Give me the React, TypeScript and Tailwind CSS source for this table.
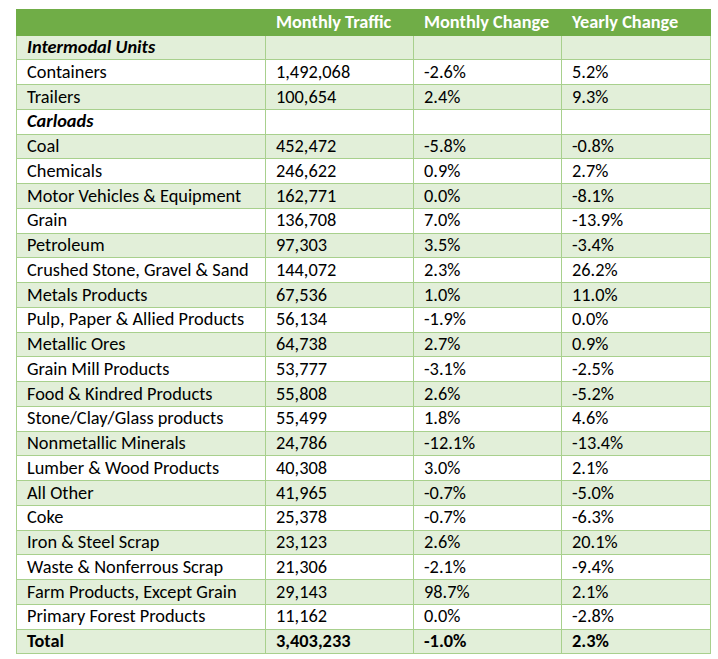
type Row = {
  label: string;
  traffic?: string;
  monthly?: string;
  yearly?: string;
  kind?: "section" | "total";
};

const rows: Row[] = [
  { label: "Intermodal Units", kind: "section" },
  { label: "Containers", traffic: "1,492,068", monthly: "-2.6%", yearly: "5.2%" },
  { label: "Trailers", traffic: "100,654", monthly: "2.4%", yearly: "9.3%" },
  { label: "Carloads", kind: "section" },
  { label: "Coal", traffic: "452,472", monthly: "-5.8%", yearly: "-0.8%" },
  { label: "Chemicals", traffic: "246,622", monthly: "0.9%", yearly: "2.7%" },
  { label: "Motor Vehicles & Equipment", traffic: "162,771", monthly: "0.0%", yearly: "-8.1%" },
  { label: "Grain", traffic: "136,708", monthly: "7.0%", yearly: "-13.9%" },
  { label: "Petroleum", traffic: "97,303", monthly: "3.5%", yearly: "-3.4%" },
  { label: "Crushed Stone, Gravel & Sand", traffic: "144,072", monthly: "2.3%", yearly: "26.2%" },
  { label: "Metals Products", traffic: "67,536", monthly: "1.0%", yearly: "11.0%" },
  { label: "Pulp, Paper & Allied Products", traffic: "56,134", monthly: "-1.9%", yearly: "0.0%" },
  { label: "Metallic Ores", traffic: "64,738", monthly: "2.7%", yearly: "0.9%" },
  { label: "Grain Mill Products", traffic: "53,777", monthly: "-3.1%", yearly: "-2.5%" },
  { label: "Food & Kindred Products", traffic: "55,808", monthly: "2.6%", yearly: "-5.2%" },
  { label: "Stone/Clay/Glass products", traffic: "55,499", monthly: "1.8%", yearly: "4.6%" },
  { label: "Nonmetallic Minerals", traffic: "24,786", monthly: "-12.1%", yearly: "-13.4%" },
  { label: "Lumber & Wood Products", traffic: "40,308", monthly: "3.0%", yearly: "2.1%" },
  { label: "All Other", traffic: "41,965", monthly: "-0.7%", yearly: "-5.0%" },
  { label: "Coke", traffic: "25,378", monthly: "-0.7%", yearly: "-6.3%" },
  { label: "Iron & Steel Scrap", traffic: "23,123", monthly: "2.6%", yearly: "20.1%" },
  { label: "Waste & Nonferrous Scrap", traffic: "21,306", monthly: "-2.1%", yearly: "-9.4%" },
  { label: "Farm Products, Except Grain", traffic: "29,143", monthly: "98.7%", yearly: "2.1%" },
  { label: "Primary Forest Products", traffic: "11,162", monthly: "0.0%", yearly: "-2.8%" },
  { label: "Total", traffic: "3,403,233", monthly: "-1.0%", yearly: "2.3%", kind: "total" },
];

const cell = "h-[24.76px] border border-[#a8d08d] p-0 pl-[10px] align-middle leading-none";

export default function App() {
  return (
    <div className="min-h-screen bg-white pl-[16px] pt-[9px] font-['Carlito','Calibri',sans-serif] text-[18.33px] text-black">
      <table className="w-[694px] table-fixed border-collapse">
        <colgroup>
          <col className="w-[249px]" />
          <col className="w-[148px]" />
          <col className="w-[148px]" />
          <col className="w-[149px]" />
        </colgroup>
        <thead>
          <tr className="bg-[#70ad47] font-bold text-white">
            <th className="h-[25.5px] border border-[#70ad47] p-0 pl-[10px] text-left leading-none" />
            <th className="h-[25.5px] border border-[#70ad47] p-0 pl-[10px] text-left leading-none">Monthly Traffic</th>
            <th className="h-[25.5px] border border-[#70ad47] p-0 pl-[10px] text-left leading-none">Monthly Change</th>
            <th className="h-[25.5px] border border-[#70ad47] p-0 pl-[10px] text-left leading-none">Yearly Change</th>
          </tr>
        </thead>
        <tbody>
          {rows.map((r, i) => (
            <tr
              key={r.label}
              className={
                (i % 2 === 0 ? "bg-[#e2efd9] " : "bg-white ") +
                (r.kind === "total" ? "font-bold" : "")
              }
            >
              <td className={cell + (r.kind === "section" ? " font-bold italic" : "")}>{r.label}</td>
              <td className={cell}>{r.traffic}</td>
              <td className={cell}>{r.monthly}</td>
              <td className={cell}>{r.yearly}</td>
            </tr>
          ))}
        </tbody>
      </table>
    </div>
  );
}
